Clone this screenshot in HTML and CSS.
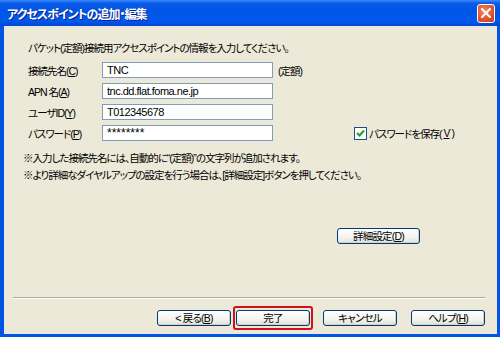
FILE: index.html
```html
<!DOCTYPE html>
<html lang="ja">
<head>
    <meta charset="UTF-8">
    <title>アクセスポイントの追加・編集</title>
    <link rel="stylesheet" href="styles.css">
</head>
<body>
    <div class="window">
        <div class="titlebar">
            <span class="title">アクセスポイントの追加・編集</span>
            <span class="close">
                <svg width="10" height="10" viewBox="0 0 10 10">
                    <path d="M1 1 L9 9 M9 1 L1 9" stroke="#fff" stroke-width="2" stroke-linecap="square"/>
                </svg>
            </span>
        </div>

        <div class="client">
            <div class="content">
                <p class="intro">パケット(定額)接続用アクセスポイントの情報を入力してください。</p>

                <div class="form">
                    <label class="field-label">接続先名(<u>C</u>)</label>
                    <div class="input">TNC</div>
                    <span class="suffix">(定額)</span>

                    <label class="field-label">APN&nbsp;名(<u>A</u>)</label>
                    <div class="input">tnc.dd.flat.foma.ne.jp</div>
                    <span></span>

                    <label class="field-label">ユーザID(<u>Y</u>)</label>
                    <div class="input">T012345678</div>
                    <span></span>

                    <label class="field-label">パスワード(<u>P</u>)</label>
                    <div class="input input-pass">********</div>
                    <label class="check">
                        <span class="box">
                            <svg width="9" height="9" viewBox="0 0 9 9">
                                <path d="M1 4 L3.5 6.5 L8 1.5" fill="none" stroke="#21a121" stroke-width="2"/>
                            </svg>
                        </span>
                        パスワードを保存(<u>V</u>)
                    </label>
                </div>

                <div class="notes">
                    <p>※入力した接続先名には、自動的に“(定額)”の文字列が追加されます。</p>
                    <p>※より詳細なダイヤルアップの設定を行う場合は、[詳細設定]ボタンを押してください。</p>
                </div>

                <div class="detail-row">
                    <button class="btn">詳細設定(<u>D</u>)</button>
                </div>
            </div>

            <div class="footer">
                <div class="separator"></div>
                <div class="buttons">
                    <button class="btn">&lt;&nbsp;戻る(<u>B</u>)</button>
                    <span class="focus"><button class="btn">完了</button></span>
                    <button class="btn btn-cancel">キャンセル</button>
                    <button class="btn btn-help">ヘルプ(<u>H</u>)</button>
                </div>
            </div>
        </div>
    </div>
</body>
</html>
```

FILE: styles.css
```css
* {
    margin: 0;
    padding: 0;
    box-sizing: border-box;
}

body {
    width: 500px;
    height: 337px;
    font-family: "Liberation Sans", "Noto Sans CJK JP", sans-serif;
    font-size: 10.5px;
    font-feature-settings: "palt";
    letter-spacing: -1px;
    color: #000;
    overflow: hidden;
}

.window {
    width: 500px;
    height: 337px;
    display: flex;
    flex-direction: column;
    background: #0055e5;
}

.titlebar {
    height: 26px;
    display: flex;
    align-items: center;
    justify-content: space-between;
    padding: 0 5px 0 7px;
    background: linear-gradient(180deg, #3d8cff 0%, #0a5ce8 12%, #0055e5 40%, #0058ee 80%, #0047d6 100%);
}

.title {
    color: #fff;
    font-weight: bold;
    font-size: 12px;
    letter-spacing: -1px;
    text-shadow: 1px 1px 0 #0a1e8c;
}

.close {
    width: 18px;
    height: 19px;
    display: flex;
    align-items: center;
    justify-content: center;
    border: 1px solid #fff;
    border-radius: 3px;
    background: radial-gradient(circle at 40% 35%, #f08a6a, #e0512c 60%, #c23a18);
}

.client {
    flex: 1;
    margin: 0 3px 3px 4px;
    background: #ece9d8;
    display: flex;
    flex-direction: column;
}

.content {
    flex: 1;
    padding: 15px 0 0 24px;
}

.intro {
    line-height: 14px;
    margin-bottom: 7px;
}

.form {
    display: grid;
    grid-template-columns: 74px 171px auto;
    grid-auto-rows: 16px;
    row-gap: 5px;
    align-items: center;
}

.input {
    height: 16px;
    border: 1px solid #7f9db9;
    background: #fff;
    padding: 0 4px;
    font-size: 11px;
    line-height: 14px;
    letter-spacing: -0.5px;
}

.input-pass {
    font-size: 12px;
    letter-spacing: 0;
}

.suffix {
    padding-left: 5px;
}

.check {
    display: flex;
    align-items: center;
    gap: 2px;
    margin-left: 81px;
}

.box {
    width: 13px;
    height: 13px;
    border: 1px solid #1c5180;
    background: #fff;
    display: flex;
    align-items: center;
    justify-content: center;
}

.notes {
    margin: 9px 0 0 -5px;
    line-height: 17px;
}

.detail-row {
    display: flex;
    justify-content: flex-end;
    margin: 44px 77px 0 0;
}

.btn {
    width: 74px;
    height: 16px;
    font-family: inherit;
    font-size: 10.5px;
    font-feature-settings: "palt";
    letter-spacing: -0.8px;
    line-height: 14px;
    color: #000;
    border: 1px solid #003c74;
    border-radius: 3px;
    background: linear-gradient(180deg, #ffffff 0%, #f4f3ee 60%, #e3e1d6 100%);
    box-shadow: inset -1px -1px 0 #d6d0c5;
}

.detail-row .btn {
    width: 83px;
}

.footer {
    height: 37px;
    padding: 0 12px 0 9px;
}

.separator {
    border-top: 1px solid #aca899;
    border-bottom: 1px solid #fff;
}

.buttons {
    display: flex;
    align-items: center;
    justify-content: flex-end;
    margin-top: 7px;
}

.focus {
    display: flex;
    margin-left: 2px;
    padding: 2px 1px;
    border: 2px solid #d2101a;
    border-radius: 3px;
}

.btn-cancel {
    margin-left: 10px;
}

.btn-help {
    margin-left: 14px;
}
```
